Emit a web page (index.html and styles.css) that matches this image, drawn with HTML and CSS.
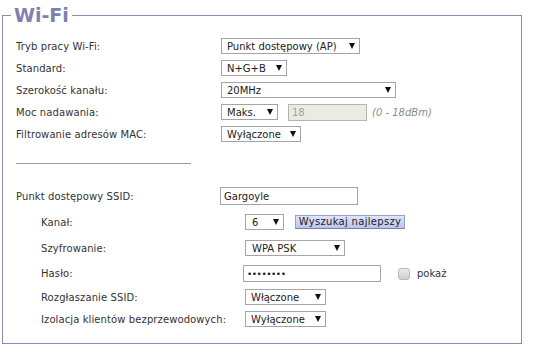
FILE: index.html
```html
<!DOCTYPE html>
<html lang="pl">
<head>
    <meta charset="UTF-8">
    <meta name="viewport" content="width=device-width, initial-scale=1.0">
    <title>Wi-Fi</title>
<link rel="stylesheet" href="styles.css">
</head>
<body>
    <fieldset class="panel">
        <legend>Wi-Fi</legend>

        <!-- Radio settings -->
        <div class="row">
            <span class="label">Tryb pracy Wi-Fi:</span>
            <div class="select w-mode">Punkt dostępowy (AP)<span class="arrow"></span></div>
        </div>
        <div class="row">
            <span class="label">Standard:</span>
            <div class="select w-std">N+G+B<span class="arrow"></span></div>
        </div>
        <div class="row">
            <span class="label">Szerokość kanału:</span>
            <div class="select w-width">20MHz<span class="arrow"></span></div>
        </div>
        <div class="row">
            <span class="label">Moc nadawania:</span>
            <div class="select w-power">Maks.<span class="arrow"></span></div>
            <div class="input disabled w-dbm">18</div>
            <span class="hint">(0 - 18dBm)</span>
        </div>
        <div class="row">
            <span class="label">Filtrowanie adresów MAC:</span>
            <div class="select w-off">Wyłączone<span class="arrow"></span></div>
        </div>

        <hr class="sep">

        <!-- Access point -->
        <div class="row row-ssid">
            <span class="label">Punkt dostępowy SSID:</span>
            <div class="input w-ssid">Gargoyle</div>
        </div>
        <div class="sub">
            <div class="row row-tall">
                <span class="label">Kanał:</span>
                <div class="select w-chan">6<span class="arrow"></span></div>
                <button type="button" class="btn">Wyszukaj najlepszy</button>
            </div>
            <div class="row row-tall">
                <span class="label">Szyfrowanie:</span>
                <div class="select w-enc">WPA PSK<span class="arrow"></span></div>
            </div>
            <div class="row row-pass">
                <span class="label">Hasło:</span>
                <div class="input w-pass">&bull;&bull;&bull;&bull;&bull;&bull;&bull;&bull;</div>
                <span class="check"></span>
                <span class="check-text">pokaż</span>
            </div>
            <div class="row">
                <span class="label">Rozgłaszanie SSID:</span>
                <div class="select w-bc">Włączone<span class="arrow"></span></div>
            </div>
            <div class="row">
                <span class="label">Izolacja klientów bezprzewodowych:</span>
                <div class="select w-bc">Wyłączone<span class="arrow"></span></div>
            </div>
        </div>
    </fieldset>
</body>
</html>
```

FILE: styles.css
```css
* {
    box-sizing: border-box;
    margin: 0;
    padding: 0;
}

body {
    font-family: "DejaVu Sans", Verdana, sans-serif;
    font-size: 10px;
    color: #333;
    background-color: #fff;
}

.panel {
    margin: 4px 11px 0 2px;
    min-width: 0;
    border: 1px solid #8a8ab4;
    padding: 9px 12px 13px 13px;
}
.panel legend {
    margin-left: -5px;
    padding: 0 3px;
    font-size: 19px;
    line-height: 22px;
    font-weight: bold;
    color: #8080b0;
}

.row {
    display: flex;
    align-items: center;
    height: 22px;
}
.row-ssid {
    height: 26px;
}
.row-tall {
    height: 26px;
}
.row-pass {
    height: 25px;
}
.label {
    width: 205px;
    flex-shrink: 0;
    letter-spacing: 0.1px;
}
.sub {
    padding-left: 25px;
}
.sub .label {
    width: 204px;
}

/* fake dropdowns */
.select {
    display: flex;
    justify-content: space-between;
    align-items: center;
    height: 16px;
    padding: 0 4px 0 5px;
    border: 1px solid #a5a5a5;
    background-color: #fff;
    color: #222;
}
.arrow {
    width: 0;
    height: 0;
    border-left: 3.5px solid transparent;
    border-right: 3.5px solid transparent;
    border-top: 6px solid #111;
}
.w-mode { width: 139px; }
.w-std { width: 66px; }
.w-width { width: 175px; }
.w-power { width: 57px; }
.w-off { width: 80px; }
.w-chan { width: 39px; padding-left: 6px; }
.w-enc { width: 100px; padding-left: 6px; }
.w-bc { width: 81px; }

.input {
    display: flex;
    align-items: center;
    height: 18px;
    padding: 0 3px;
    border: 1px solid #a5a5a5;
    background-color: #fff;
    color: #222;
}
.input.disabled {
    height: 17px;
    background-color: #ebebe4;
    border-color: #b5b5b0;
    color: #a0a0a0;
}
.w-dbm { width: 79px; margin-left: 10px; }
.w-ssid { width: 138px; margin-left: -1px; }
.w-pass { width: 138px; height: 17px; margin-left: -2px; font-size: 9px; letter-spacing: -0.5px; }

.hint {
    margin-left: 5px;
    font-style: italic;
    color: #8a8a8a;
}

.btn {
    height: 14px;
    width: 110px;
    margin-left: 11px;
    border: 1px solid #9aa0c8;
    border-bottom-color: #7a80a8;
    background: linear-gradient(#e0e4fb, #bcc4ee);
    font-family: inherit;
    font-size: 10px;
    color: #222;
    line-height: 12px;
    letter-spacing: 0.3px;
}

.check {
    width: 12px;
    height: 12px;
    margin-left: 17px;
    border: 1px solid #b8b8b8;
    border-radius: 3px;
    background: linear-gradient(#ececec, #cfcfcf);
}
.check-text {
    margin-left: 7px;
}

.sep {
    width: 175px;
    margin: 18px 0 19px 0;
    border: none;
    border-top: 1px solid #999;
}
```
